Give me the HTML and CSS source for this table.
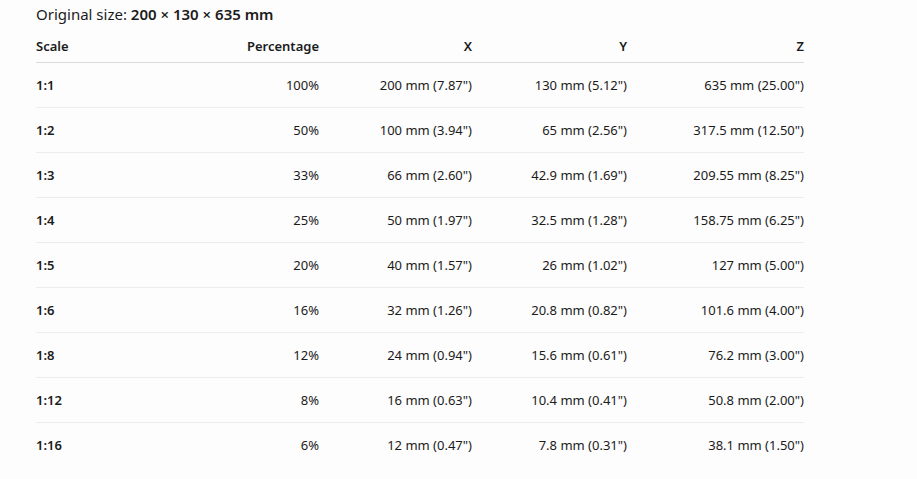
FILE: index.html
```html
<!DOCTYPE html>
<html>
<head>
<meta charset="utf-8">
<link rel="stylesheet" href="styles.css">
</head>
<body>
<div class="wrap">
  <p class="title">Original size: <b>200 × 130 × 635 mm</b></p>
  <table class="scale-table">
    <colgroup>
      <col class="c1"><col class="c2"><col class="c3"><col class="c4"><col class="c5">
    </colgroup>
    <thead>
      <tr><th class="left">Scale</th><th>Percentage</th><th>X</th><th>Y</th><th>Z</th></tr>
    </thead>
    <tbody>
      <tr><td class="left b">1:1</td><td>100%</td><td>200 mm (7.87")</td><td>130 mm (5.12")</td><td>635 mm (25.00")</td></tr>
      <tr><td class="left b">1:2</td><td>50%</td><td>100 mm (3.94")</td><td>65 mm (2.56")</td><td>317.5 mm (12.50")</td></tr>
      <tr><td class="left b">1:3</td><td>33%</td><td>66 mm (2.60")</td><td>42.9 mm (1.69")</td><td>209.55 mm (8.25")</td></tr>
      <tr><td class="left b">1:4</td><td>25%</td><td>50 mm (1.97")</td><td>32.5 mm (1.28")</td><td>158.75 mm (6.25")</td></tr>
      <tr><td class="left b">1:5</td><td>20%</td><td>40 mm (1.57")</td><td>26 mm (1.02")</td><td>127 mm (5.00")</td></tr>
      <tr><td class="left b">1:6</td><td>16%</td><td>32 mm (1.26")</td><td>20.8 mm (0.82")</td><td>101.6 mm (4.00")</td></tr>
      <tr><td class="left b">1:8</td><td>12%</td><td>24 mm (0.94")</td><td>15.6 mm (0.61")</td><td>76.2 mm (3.00")</td></tr>
      <tr><td class="left b">1:12</td><td>8%</td><td>16 mm (0.63")</td><td>10.4 mm (0.41")</td><td>50.8 mm (2.00")</td></tr>
      <tr><td class="left b">1:16</td><td>6%</td><td>12 mm (0.47")</td><td>7.8 mm (0.31")</td><td>38.1 mm (1.50")</td></tr>
    </tbody>
  </table>
</div>
</body>
</html>
```
FILE: styles.css
```css
html, body {
  margin: 0;
  padding: 0;
  background: #fdfdfd;
}
body {
  font-family: "Noto Sans", "Open Sans", sans-serif;
  color: #1b1b1b;
}
.wrap {
  padding: 3px 0 0 36px;
}
.title {
  margin: 0 0 12px 0;
  font-size: 15px;
  line-height: 22px;
}
.title b {
  font-weight: 600;
}
.scale-table {
  border-collapse: collapse;
  width: 768px;
  table-layout: fixed;
  font-size: 13px;
}
.c1 { width: 140px; }
.c2 { width: 143px; }
.c3 { width: 153px; }
.c4 { width: 155px; }
.c5 { width: 177px; }
.scale-table th {
  font-weight: 600;
  text-align: right;
  padding: 0;
  height: 25px;
  vertical-align: top;
  border-bottom: 1px solid #dcdcdc;
}
.scale-table td {
  text-align: right;
  padding: 0;
  height: 44px;
  border-bottom: 1px solid #ececec;
}
.scale-table tbody tr:last-child td {
  border-bottom: none;
}
.scale-table .left {
  text-align: left;
}
.scale-table .b {
  font-weight: 600;
}
```
